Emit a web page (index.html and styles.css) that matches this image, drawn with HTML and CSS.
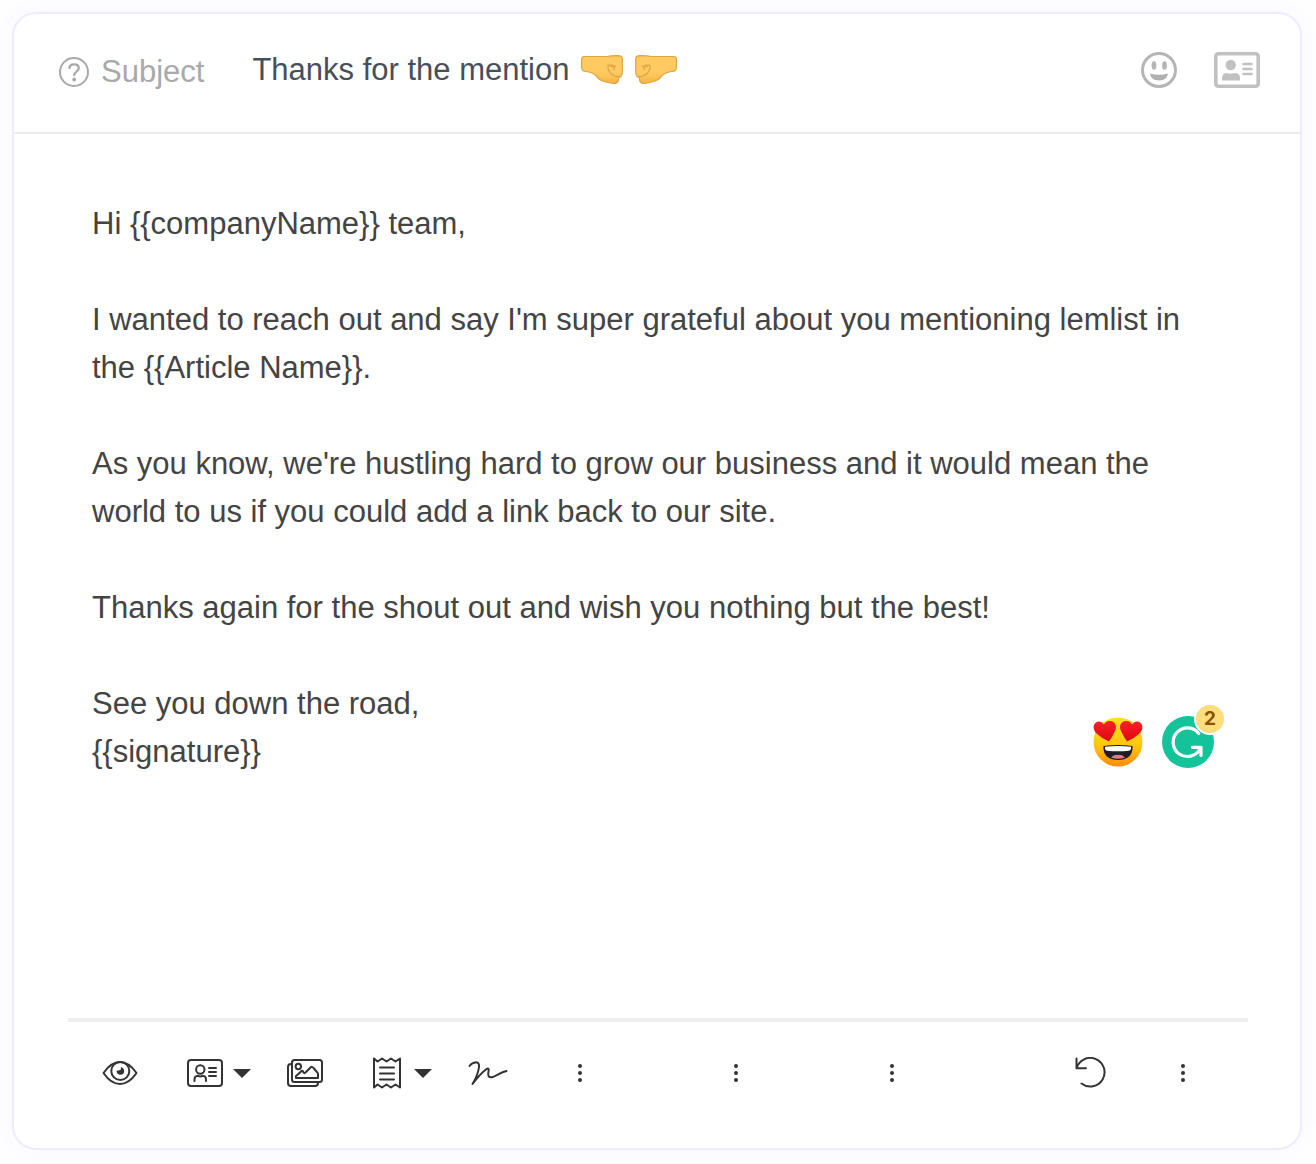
FILE: index.html
```
<!DOCTYPE html>
<html lang="en">

<head>
  <meta charset="UTF-8">
  <meta name="viewport" content="width=device-width, initial-scale=1.0">
  <title>Email editor</title>
  <link rel="stylesheet" href="styles.css">
</head>

<body>

  <form class="card">
    <header class="subject-bar">
      <button type="button" class="icon-btn help" aria-label="Help">
        <svg width="30" height="30" viewBox="0 0 30 30" fill="none" stroke="#a9a9a9" stroke-width="2" stroke-linecap="round">
          <circle cx="15" cy="15" r="14" />
          <path d="M10.500 11C10.500 8.500 12.500 7.300 15 7.300C17.800 7.300 19.800 8.800 19.800 11.300C19.800 14.500 15.200 14.700 15.200 18" stroke-width="2.300" />
          <circle cx="15.200" cy="22.500" r="1.900" fill="#a9a9a9" stroke="none" />
        </svg>
      </button>
      <label class="subject-label" for="subject">Subject</label>
      <input class="subject-input" id="subject" type="text" value="Thanks for the mention">
      <span class="fists" role="img" aria-label="Fist bump">
        <svg class="fist" width="44" height="32" viewBox="0 0 44 32">
          <defs>
            <linearGradient id="skin" x1="0" y1="0" x2="0" y2="1">
              <stop offset="0.600" stop-color="#ffca62" />
              <stop offset="1" stop-color="#f5b344" />
            </linearGradient>
          </defs>
          <g id="fist-shape" stroke="#dfa443" stroke-width="1.200" stroke-linejoin="round" stroke-linecap="round">
            <path d="M3.500 2.500H27L31 1.800L38 1.600Q42 1.600 42.300 4V19Q42 22 39 22.800L38.500 26Q37.500 29.800 33 29.500L24 27.500Q19 26 17 23Q14 19 9 18L4 17.200Q1.500 16.500 1.500 12V6Q1.500 3 3.500 2.500Z" fill="url(#skin)" />
            <path d="M28 11Q27.500 17 32 20.500Q35.500 23 41 22.800M28.500 11.300Q32 10.800 35.500 12.200Q33.500 13.500 33.800 15.800M30.500 12.500L33.500 13.200" fill="none" />
          </g>
        </svg>
        <svg class="fist" width="44" height="32" viewBox="0 0 44 32">
          <use href="#fist-shape" transform="matrix(-1 0 0 1 44 0)" />
        </svg>
      </span>
      <div class="subject-actions">
        <button type="button" class="icon-btn" aria-label="Insert emoji">
          <svg width="38" height="38" viewBox="0 0 38 38">
            <circle cx="19" cy="19" r="16.500" fill="none" stroke="#b5b5b5" stroke-width="3" />
            <ellipse cx="14" cy="14.500" rx="2.400" ry="4.300" fill="#b5b5b5" />
            <ellipse cx="24.500" cy="14.500" rx="2.400" ry="4.300" fill="#b5b5b5" />
            <path d="M10 22.500Q19 25 28 22.500Q27 29.500 19 29.500Q11 29.500 10 22.500Z" fill="#b0b0b0" />
          </svg>
        </button>
        <button type="button" class="icon-btn" aria-label="Insert variable">
          <svg width="46" height="36" viewBox="0 0 46 36" fill="#c1c1c1">
            <rect x="1.800" y="1.800" width="42.400" height="32.400" rx="2.500" fill="none" stroke="#c1c1c1" stroke-width="3.600" />
            <circle cx="16.700" cy="13" r="5.200" />
            <path d="M8 28.500V26Q8 21 13 21Q16.700 22.500 20.500 21Q26 21 26 26V28.500Z" />
            <path d="M29.500 12H37.500M29.500 17H37.500M29.500 22H37.500" stroke="#c1c1c1" stroke-width="2.600" stroke-linecap="round" />
          </svg>
        </button>
      </div>
    </header>

    <div class="editor">
      <textarea class="message" aria-label="Message" spellcheck="false">Hi {{companyName}} team,

I wanted to reach out and say I'm super grateful about you mentioning lemlist in the {{Article Name}}.

As you know, we're hustling hard to grow our business and it would mean the world to us if you could add a link back to our site.

Thanks again for the shout out and wish you nothing but the best!

See you down the road,
{{signature}}</textarea>

      <div class="assistants">
        <button type="button" class="icon-btn" aria-label="Tone: loving">
          <svg width="50" height="50" viewBox="0 0 50 50">
            <defs>
              <linearGradient id="face" x1="0" y1="0" x2="0" y2="1">
                <stop offset="0" stop-color="#ffe11c" />
                <stop offset="0.550" stop-color="#ffc80c" />
                <stop offset="1" stop-color="#ff8d0c" />
              </linearGradient>
              <linearGradient id="heart" x1="0" y1="0" x2="0" y2="1">
                <stop offset="0" stop-color="#fb2028" />
                <stop offset="1" stop-color="#dd0810" />
              </linearGradient>
            </defs>
            <circle cx="25" cy="25" r="24.500" fill="url(#face)" />
            <path d="M16 24.500Q8 21 2.500 15.500C-1.500 10 1.500 4.500 6 4.500Q9 4.500 11 7.500Q13 3.500 17.500 4C23 5 24 10 22 14Q19 20.500 16 24.500Z" fill="url(#heart)" />
            <path d="M34 24.500Q42 21 47.500 15.500C51.500 10 48.500 4.500 44 4.500Q41 4.500 39 7.500Q37 3.500 32.500 4C27 5 26 10 28 14Q31 20.500 34 24.500Z" fill="url(#heart)" />
            <path d="M10.500 29Q25 27 39.500 29Q40.500 42.500 25 43Q9.500 42.500 10.500 29Z" fill="#201a2b" />
            <path d="M12 29.800Q25 28 38 29.800Q38.500 33.500 36 33.700Q25 35 14 33.700Q11.500 33.500 12 29.800Z" fill="#fff" />
            <path d="M18 40.500Q21 37 25 38Q29 37 32 40.500Q25 43 18 40.500Z" fill="#f7718a" />
          </svg>
        </button>
        <button type="button" class="icon-btn grammar" aria-label="2 writing suggestions">
          <svg width="52" height="52" viewBox="0 0 52 52">
            <circle cx="26" cy="26" r="26" fill="#15c39a" />
            <g fill="none" stroke="#fff" stroke-width="3.200" stroke-linecap="round" stroke-linejoin="round">
              <path d="M36.800 17.500A14.300 14.300 0 1 0 38 33" />
              <path d="M30.500 31.300H39V39.500" />
            </g>
          </svg>
          <span class="badge">2</span>
        </button>
      </div>
    </div>

    <div class="toolbar">
      <div class="tools">
        <button type="button" class="icon-btn" aria-label="Preview">
          <svg class="line-icon" width="36" height="32" viewBox="0 0 36 32">
            <path d="M1.500 16Q9 5 18 5Q27 5 34.500 16Q27 27 18 27Q9 27 1.500 16Z" />
            <circle cx="18.300" cy="14" r="9" />
            <path d="M18.800 10Q19.500 13 17.500 13.300L14.500 13.800Q14.800 17.700 18.500 17.800Q22.200 17.500 22.200 14Q22 10.800 18.800 10Z" fill="#333" stroke="none" />
          </svg>
        </button>
        <button type="button" class="icon-btn menu-btn" aria-label="Variables">
          <svg class="line-icon" width="36" height="32" viewBox="0 0 36 32">
            <rect x="1" y="3" width="34" height="26" rx="3" />
            <circle cx="13.300" cy="12.500" r="4.200" />
            <path d="M7.500 24V22.500Q7.500 19 11 18.800Q13.300 20 15.500 18.800Q19 19 19 22.500V24M22 11H29M22 15H29M22 19H29" />
          </svg>
          <svg class="caret" width="18" height="9" viewBox="0 0 18 9"><path d="M0 0H18L9 9Z" /></svg>
        </button>
      </div>
      <div class="tools">
        <button type="button" class="icon-btn" aria-label="Image">
          <svg class="line-icon" width="36" height="32" viewBox="0 0 36 32">
            <rect x="5" y="3" width="30" height="22" rx="2.500" />
            <path d="M5 7H4Q1 7 1 10V26Q1 29 4 29H28Q31 29 31 26V25" />
            <circle cx="11.300" cy="9.500" r="2.700" />
            <path d="M9 21V19Q11 17.500 14.500 14Q15.500 13 16.500 15.500Q17.500 17 19 15L23.500 10.500Q25 9 26.500 11L29.500 14.500Q31 16 31 17V21Z" />
          </svg>
        </button>
        <button type="button" class="icon-btn menu-btn" aria-label="Templates">
          <svg class="line-icon" width="32" height="32" viewBox="0 0 32 32">
            <path d="M2 1.500V30.500L5.500 27.500L10 30.500L14.500 27.500L19 30.500L23.500 27.500L28 30.500V1.500L23.500 4.500L19 1.500L14.500 4.500L10 1.500L5.500 4.500ZM8 10.500H22M8 16.500H22M8 22.500H22" />
          </svg>
          <svg class="caret" width="18" height="9" viewBox="0 0 18 9"><path d="M0 0H18L9 9Z" /></svg>
        </button>
      </div>
      <div class="tools more-tools">
        <button type="button" class="icon-btn signature-btn" aria-label="Signature">
          <svg class="line-icon" width="40" height="32" viewBox="0 0 40 32">
            <path d="M1.500 9Q4 5.500 8 5.200Q11.500 5.500 11 10Q10 18 4.500 27Q12 17 18.500 12Q21.500 10.500 20.500 14.500C19.500 19 20.500 20.500 24 20.200C28 19.500 32 15.500 38.500 14" />
          </svg>
        </button>
        <button type="button" class="icon-btn" aria-label="More inserts">
          <svg class="dots" width="12" height="32" viewBox="0 0 12 32"><circle cx="6" cy="9" r="2" /><circle cx="6" cy="16" r="2" /><circle cx="6" cy="23" r="2" /></svg>
        </button>
        <button type="button" class="icon-btn" aria-label="More formatting">
          <svg class="dots" width="12" height="32" viewBox="0 0 12 32"><circle cx="6" cy="9" r="2" /><circle cx="6" cy="16" r="2" /><circle cx="6" cy="23" r="2" /></svg>
        </button>
        <button type="button" class="icon-btn" aria-label="More paragraph options">
          <svg class="dots" width="12" height="32" viewBox="0 0 12 32"><circle cx="6" cy="9" r="2" /><circle cx="6" cy="16" r="2" /><circle cx="6" cy="23" r="2" /></svg>
        </button>
      </div>
      <div class="tools history">
        <button type="button" class="icon-btn" aria-label="Undo">
          <svg class="line-icon" width="34" height="32" viewBox="0 0 34 32">
            <path d="M2.500 1.500V11.300H12M2.500 11.300A14.300 14.300 0 1 1 7.500 26.500" />
          </svg>
        </button>
        <button type="button" class="icon-btn" aria-label="More options">
          <svg class="dots" width="12" height="32" viewBox="0 0 12 32"><circle cx="6" cy="9" r="2" /><circle cx="6" cy="16" r="2" /><circle cx="6" cy="23" r="2" /></svg>
        </button>
      </div>
    </div>
  </form>

</body>

</html>
```
FILE: styles.css
```
* {
  box-sizing: border-box;
}

body {
  margin: 0;
  padding: 12px 14px 14px 12px;
  min-height: 100vh;
  display: flex;
  background: #fefeff;
  font-family: "Liberation Sans", Arial, sans-serif;
  font-size: 31px;
  line-height: 48px;
  color: #444;
}

.card {
  flex: 1;
  min-width: 0;
  display: flex;
  flex-direction: column;
  border: 2px solid #ececfe;
  border-radius: 24px;
  background: #fff;
  box-shadow: 0 0 24px rgba(100, 100, 255, 0.04);
}

.icon-btn {
  display: flex;
  align-items: center;
  padding: 0;
  border: 0;
  background: none;
  cursor: pointer;
}

.icon-btn svg {
  display: block;
  flex: none;
}

/* subject */
.subject-bar {
  display: flex;
  align-items: center;
  padding: 32px 40px 38px 45px;
  border-bottom: 2px solid #ececec;
}

.help {
  margin-right: 12px;
  padding-top: 4px;
}

.subject-label {
  padding-top: 4px;
  line-height: 44px;
  color: #a9a9a9;
}

.subject-input {
  width: 316px;
  height: 48px;
  margin-left: 48px;
  padding: 0;
  border: 0;
  outline: 0;
  background: none;
  font: inherit;
  color: #474f59;
}

.fists {
  display: flex;
  gap: 10px;
  margin-left: 12px;
}

.subject-actions {
  display: flex;
  align-items: center;
  gap: 36px;
  margin-left: auto;
}

/* message */
.editor {
  flex: 1;
  display: flex;
  position: relative;
}

.message {
  flex: 1;
  min-width: 0;
  min-height: 640px;
  padding: 66px 86px 16px 78px;
  border: 0;
  outline: 0;
  resize: none;
  overflow: hidden;
  background: none;
  font: inherit;
  color: inherit;
}

.assistants {
  position: absolute;
  right: 86px;
  bottom: 250px;
  display: flex;
  gap: 19px;
}

.grammar {
  position: relative;
}

.badge {
  position: absolute;
  top: -13px;
  right: -12px;
  min-width: 32px;
  height: 32px;
  border: 2px solid #fff;
  border-radius: 16px;
  background: #ffdc7c;
  font: bold 19px/28px Inter, sans-serif;
  color: #8a5200;
  text-align: center;
}

/* toolbar */
.toolbar {
  display: flex;
  align-items: center;
  margin: 0 52px 0 54px;
  padding: 35px 59px 59px 34px;
  border-top: 4px solid #eee;
}

.tools {
  display: flex;
  align-items: center;
  gap: 49px;
  margin-right: 36px;
}

.menu-btn {
  gap: 10px;
}

.more-tools {
  gap: 144px;
}

/* sits closer to the first dots than they do to each other */
.signature-btn {
  margin-right: -78px;
}

.history {
  gap: 69px;
  margin: 0 0 0 auto;
}

.line-icon {
  fill: none;
  stroke: #333;
  stroke-width: 2;
  stroke-linecap: round;
  stroke-linejoin: round;
}

.caret,
.dots {
  fill: #333;
}
```
